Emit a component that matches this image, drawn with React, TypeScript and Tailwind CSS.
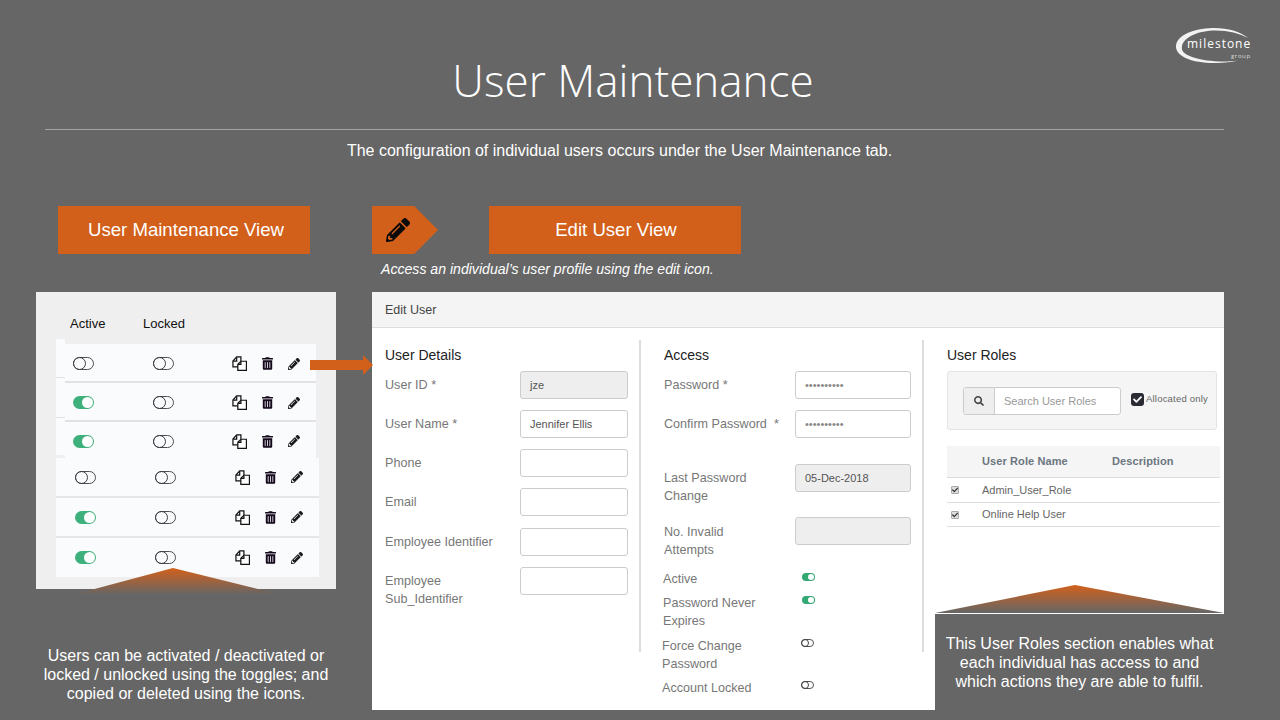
import { FaPencilAlt, FaSearch, FaTrashAlt, FaCheck } from 'react-icons/fa';

function CopyIcon() {
  return (
    <svg viewBox="0 0 16 16" className="w-[15px] h-[15px]" fill="none" stroke="#111" strokeWidth="1.3">
      <path d="M6.5 11.500H1V5.400L5 1h4.500v4.600" />
      <path d="M5 1.200v4.200H1.200" />
      <path d="M9.500 5.600h5.900v9.800H6.200V8.800z" fill="#fff" />
      <path d="M9.500 5.800v3.200H6.400" />
    </svg>
  );
}

function RowToggle({ on }: { on?: boolean }) {
  if (on) {
    return (
      <div className="w-[21px] h-[13px] rounded-full bg-[#3eb07b] flex items-center justify-end pr-px">
        <div className="w-[11px] h-[11px] rounded-full bg-white" />
      </div>
    );
  }
  return (
    <div className="w-[21px] h-[13px] rounded-full border-[1.5px] border-[#4d4d55] flex items-center">
      <div className="w-[13px] h-[13px] -ml-[1.5px] rounded-full border-[1.5px] border-[#3c3c44]" />
    </div>
  );
}

function SmallToggle({ on }: { on?: boolean }) {
  if (on) {
    return (
      <div className="w-[13px] h-[8px] rounded-full bg-[#33a873] flex items-center justify-end pr-px">
        <div className="w-[6px] h-[6px] rounded-full bg-white" />
      </div>
    );
  }
  return (
    <div className="w-[13px] h-[8px] rounded-full border border-[#555] flex items-center">
      <div className="w-[8px] h-[8px] -ml-px rounded-full border border-[#444]" />
    </div>
  );
}

function UserRow({ on, inset }: { on?: boolean; inset?: boolean }) {
  return (
    <div className={`h-full flex items-center bg-[#fafbfd] ${inset ? 'pl-[19px]' : 'pl-[8px] pt-[2px]'}`}>
      <div className="w-[80px]"><RowToggle on={on} /></div>
      <div className="w-[80px]"><RowToggle /></div>
      <div className={inset ? 'w-[30px]' : 'w-[30px] -ml-px'}><CopyIcon /></div>
      <div className="w-[26px]"><FaTrashAlt className="w-[11px] h-[13px] text-[#150a1c]" /></div>
      <FaPencilAlt className="w-[12px] h-[12px] text-[#1a1a1a]" />
    </div>
  );
}

function TextBox({ value, disabled, dots, className }: { value?: string; disabled?: boolean; dots?: boolean; className?: string }) {
  return (
    <div
      className={`h-[28px] shrink-0 rounded-[3px] border border-[#ccc] pl-[9px] flex items-center text-[11px] ${
        dots ? 'text-[#888]' : 'text-[#555]'
      } ${disabled ? 'bg-[#eee]' : 'bg-white'} ${className ?? ''}`}
    >
      {value}
    </div>
  );
}

function DetailRow({ label, value, disabled, className }: { label: React.ReactNode; value?: string; disabled?: boolean; className?: string }) {
  return (
    <div className={`flex items-start ${className ?? ''}`}>
      <div className="w-[135px] pt-[5px] text-[12.600px] leading-[18px] text-[#777]">{label}</div>
      <TextBox value={value} disabled={disabled} className="w-[108px]" />
    </div>
  );
}

function AccessRow({ label, value, disabled, dots, className, labelClass }: { label: React.ReactNode; value?: string; disabled?: boolean; dots?: boolean; className?: string; labelClass?: string }) {
  return (
    <div className={`flex items-start ${className ?? ''}`}>
      <div className={`w-[131px] text-[12.600px] leading-[18px] text-[#777] ${labelClass ?? 'pt-[5px]'}`}>{label}</div>
      <TextBox value={value} disabled={disabled} dots={dots} className="w-[116px]" />
    </div>
  );
}

function FlagRow({ label, on, className, toggleClass }: { label: React.ReactNode; on?: boolean; className?: string; toggleClass?: string }) {
  return (
    <div className={`flex items-start text-[12.600px] leading-[18px] text-[#777] ${className ?? ''}`}>
      <div className="w-[139px]">{label}</div>
      <div className={toggleClass}><SmallToggle on={on} /></div>
    </div>
  );
}

function RoleRow({ name, className }: { name: string; className?: string }) {
  return (
    <div className={`flex items-center border-b border-[#ddd] text-[11px] text-[#666] ${className ?? ''}`}>
      <div className="ml-[4px] w-[8px] h-[8px] rounded-[1px] bg-[#ddd] border border-[#aaa] flex items-center justify-center">
        <FaCheck className="w-[6px] h-[6px] text-[#333]" />
      </div>
      <span className="ml-[23px]">{name}</span>
    </div>
  );
}

function Banner({ children, className }: { children: React.ReactNode; className?: string }) {
  return (
    <div className={`w-[252px] h-[48px] bg-[#d2601a] flex items-center justify-center text-[18.600px] text-white ${className ?? ''}`}>
      {children}
    </div>
  );
}

function Logo() {
  return (
    <div className="absolute left-[1172px] top-[22px] w-[84px] h-[46px] text-white">
      <svg viewBox="0 0 84 46" className="absolute inset-0 w-full h-full">
        <path
          d="M76 16C68 9 54 5.500 40 6C22 6.500 5 13 4 24C3.500 33 16 40 38 41C50 41.500 60 40 66 38.500C52 40.500 33 39.500 20 35C12 32 9 29 10 24C12 15 26 8.500 44 8.500C56 8.500 68 11.500 76 16Z"
          fill="#f2f2f2"
        />
      </svg>
      <div className="absolute left-[15px] top-[16px] text-[12px] leading-[12px] tracking-[1px] font-['Open_Sans',sans-serif]">milestone</div>
      <div className="absolute left-[59px] top-[31px] text-[6px] leading-[7px] tracking-[0.6px] text-[#ddd] font-['Open_Sans',sans-serif]">group</div>
    </div>
  );
}

export default function App() {
  return (
    <div className="relative w-[1280px] h-[720px] overflow-hidden bg-[#666666] font-['Liberation_Sans',Arial,sans-serif]">
      <Logo />

      <h1 className="pt-[48px] h-[112px] pr-[14px] text-center text-[44px] leading-[64px] font-light text-white font-['Open_Sans',sans-serif]">
        User Maintenance
      </h1>
      <div className="mt-[17px] ml-[45px] w-[1179px] h-px bg-[#a3a3a3]" />
      <p className="mt-[11px] h-[20px] pr-[41px] text-center text-[16px] leading-[20px] text-white">
        The configuration of individual users occurs under the User Maintenance tab.
      </p>

      <div className="mt-[45px] ml-[36px] flex gap-[36px]">
        {/* left column: list view */}
        <div className="w-[300px]">
          <Banner className="ml-[22px] pl-[4px]">User Maintenance View</Banner>

          <div className="relative mt-[38px] h-[297px] bg-[#efefef] pt-[23px]">
            <div className="flex h-[18px] text-[13px] leading-[18px] text-[#111]">
              <span className="ml-[34px] w-[73px]">Active</span>
              <span>Locked</span>
            </div>

            <div className="mt-[6px] ml-[20px] flex h-[119px]">
              <div className="w-[9px] h-[116px] bg-[#fafbfd]">
                <div className="h-[39px] border-b border-[#e0e0e0]" />
                <div className="h-[40px] border-b border-[#e0e0e0]" />
              </div>
              <div className="w-[251px] pt-[5px]">
                <div className="h-[39px] border-b-2 border-[#e2e2e4]"><UserRow /></div>
                <div className="h-[39px] border-b-2 border-[#e2e2e4]"><UserRow on /></div>
                <div className="h-[36px]"><UserRow on /></div>
              </div>
            </div>

            <div className="ml-[20px] w-[263px]">
              <div className="h-[40px] border-b-2 border-[#e6e6e8]"><UserRow inset /></div>
              <div className="h-[40px] border-b-2 border-[#e6e6e8]"><UserRow on inset /></div>
              <div className="h-[39px]"><UserRow on inset /></div>
            </div>

            <svg viewBox="0 0 210 27" className="absolute left-[36px] top-[276px] w-[210px] h-[27px]">
              <defs>
                <linearGradient id="leftPeak" x1="0" y1="0" x2="0" y2="1">
                  <stop offset="0" stopColor="#d2601a" />
                  <stop offset="1" stopColor="#666666" />
                </linearGradient>
              </defs>
              <path d="M0 27L101 0L210 27Z" fill="url(#leftPeak)" />
            </svg>
          </div>

          <p className="mt-[57px] text-center text-[16px] leading-[19px] text-white">
            Users can be activated / deactivated or
            <br />
            locked / unlocked using the toggles; and
            <br />
            copied or deleted using the icons.
          </p>
        </div>

        {/* right column: edit view */}
        <div className="w-[852px]">
          <div className="flex gap-[51px]">
            <div className="w-[66px] h-[48px] bg-[#d2601a] pl-[14px] flex items-center [clip-path:polygon(0_0,64%_0,100%_50%,64%_100%,0_100%)]">
              <FaPencilAlt className="w-[24px] h-[24px] text-[#0a0a0a]" />
            </div>
            <Banner className="pl-[2px]">Edit User View</Banner>
          </div>
          <p className="mt-[5px] ml-[9px] text-[14.100px] leading-[20px] italic text-white">
            Access an individual&rsquo;s user profile using the edit icon.
          </p>

          <div className="relative mt-[13px] h-[418px] bg-white">
            <div className="h-[36px] pl-[13px] pt-px flex items-center bg-[#f4f4f4] border-b border-[#ddd] text-[12.500px] text-[#444]">
              Edit User
            </div>

            <div className="mt-[12px] flex">
              <div className="w-[269px] h-[312px] border-r-2 border-[#ddd] pl-[13px]">
                <h2 className="h-[31px] pt-[7px] text-[14px] leading-[16px] text-[#222]">User Details</h2>
                <div className="flex flex-col gap-[11px]">
                  <DetailRow label="User ID *" value="jze" disabled />
                  <DetailRow label="User Name *" value="Jennifer Ellis" />
                  <DetailRow label="Phone" />
                  <DetailRow label="Email" />
                  <DetailRow label="Employee Identifier" className="mt-px" />
                  <DetailRow label={<>Employee<br />Sub_Identifier</>} />
                </div>
              </div>

              <div className="w-[283px] h-[312px] border-r-2 border-[#ddd] pl-[23px]">
                <h2 className="h-[31px] pt-[7px] text-[14px] leading-[16px] text-[#222]">Access</h2>
                <AccessRow label="Password *" value="••••••••••" dots />
                <AccessRow label={<>Confirm Password&nbsp; *</>} value="••••••••••" dots className="mt-[11px]" />
                <AccessRow label={<>Last Password<br />Change</>} value="05-Dec-2018" disabled className="mt-[26px]" />
                <AccessRow label={<>No. Invalid<br />Attempts</>} disabled className="mt-[12px]" labelClass="pt-[6px]" />
                <FlagRow label="Active" on className="mt-[11px] -ml-px" toggleClass="pt-[3px]" />
                <FlagRow label={<>Password Never<br />Expires</>} on className="mt-[6px] -ml-px" toggleClass="pt-[2px]" />
                <FlagRow label={<>Force Change<br />Password</>} className="mt-[7px] -ml-[2px]" toggleClass="pt-[2px]" />
                <FlagRow label="Account Locked" className="mt-[6px] -ml-[2px]" toggleClass="pt-[2px]" />
              </div>

              <div className="pl-[23px] w-[296px]">
                <h2 className="h-[31px] pt-[7px] text-[14px] leading-[16px] text-[#222]">User Roles</h2>
                <div className="w-[270px] h-[59px] rounded-[3px] border border-[#e3e3e3] bg-[#f5f5f5] pl-[15px] pt-[15px] flex items-start">
                  <div className="w-[158px] h-[28px] rounded-[3px] border border-[#ccc] bg-white flex text-[11px] text-[#999]">
                    <div className="w-[31px] bg-[#eee] border-r border-[#ccc] flex items-center justify-center rounded-l-[3px]">
                      <FaSearch className="w-[10px] h-[10px] text-[#444]" />
                    </div>
                    <div className="pl-[9px] flex items-center">Search User Roles</div>
                  </div>
                  <div className="ml-[10px] mt-[6px] w-[13px] h-[13px] rounded-[3px] bg-[#2b2b33] flex items-center justify-center">
                    <FaCheck className="w-[9px] h-[9px] text-white" />
                  </div>
                  <span className="ml-[2px] mt-[5px] text-[9.500px] leading-[14px] tracking-[0.2px] text-[#666]">Allocated only</span>
                </div>

                <div className="mt-[16px] w-[273px]">
                  <div className="h-[32px] flex items-center bg-[#f5f5f5] border-b border-[#ddd] text-[11px] font-bold tracking-[0.1px] text-[#6b7680]">
                    <span className="ml-[35px] w-[130px]">User Role Name</span>
                    <span>Description</span>
                  </div>
                  <RoleRow name="Admin_User_Role" className="h-[25px]" />
                  <RoleRow name="Online Help User" className="h-[24px]" />
                </div>
              </div>
            </div>

            {/* callout that sits over the panel's lower right corner */}
            <div className="absolute left-[563px] top-[293px] w-[289px] h-[28px]">
              <svg viewBox="0 0 289 28" className="w-full h-full">
                <defs>
                  <linearGradient id="rightPeak" x1="0" y1="0" x2="0" y2="1">
                    <stop offset="0" stopColor="#d2601a" />
                    <stop offset="1" stopColor="#666666" />
                  </linearGradient>
                </defs>
                <path d="M0 28L140 0L289 28Z" fill="url(#rightPeak)" />
              </svg>
            </div>
            <div className="absolute left-[563px] top-[322px] w-[289px] h-[96px] bg-[#666666] pt-[20px] text-center text-[16px] leading-[19px] text-white">
              This User Roles section enables what
              <br />
              each individual has access to and
              <br />
              which actions they are able to fulfil.
            </div>

            <svg viewBox="0 0 64 20" className="absolute -left-[62px] top-[63px] w-[64px] h-[20px]">
              <path d="M0 5H53V0L63 10L53 20V15H0Z" fill="#d2601a" />
            </svg>
          </div>
        </div>
      </div>
    </div>
  );
}
